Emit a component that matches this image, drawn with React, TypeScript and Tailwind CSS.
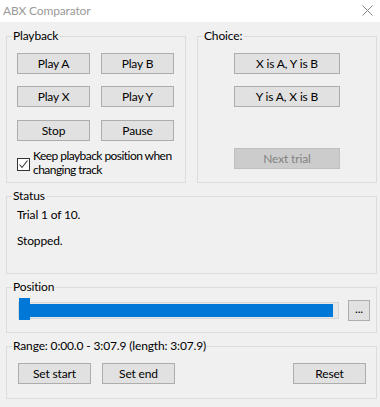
import type { ReactNode } from "react";

function Btn({
  children,
  className = "",
  disabled = false,
}: {
  children: ReactNode;
  className?: string;
  disabled?: boolean;
}) {
  return (
    <button
      type="button"
      className={`flex h-[21px] items-center justify-center border leading-none ${
        disabled
          ? "border-[#bfbfbf] bg-[#cccccc] text-[#838383]"
          : "border-[#adadad] bg-[#e1e1e1] text-black"
      } ${className}`}
    >
      {children}
    </button>
  );
}

function Group({
  label,
  className = "",
  children,
}: {
  label: string;
  className?: string;
  children: ReactNode;
}) {
  return (
    <div className={`relative border border-[#dcdcdc] ${className}`}>
      <span className="absolute left-[5px] top-[-9px] whitespace-nowrap bg-[#f0f0f0] px-[1px] leading-[16px]">
        {label}
      </span>
      {children}
    </div>
  );
}

export default function App() {
  return (
    <div
      className="h-[407px] w-[380px] overflow-hidden bg-[#f0f0f0] text-[12px] tracking-[-0.15px] text-black"
      style={{ fontFamily: 'Lato, "Noto Sans", sans-serif' }}
    >
      <div className="flex h-[22px] items-center justify-between bg-white pl-[3px] pr-[7px]">
        <span className="text-[#9a9a9a]">ABX Comparator</span>
        <svg width="11" height="11" viewBox="0 0 11 11" className="mb-[2px]">
          <path d="M0.5 0.5 L10.5 10.5 M10.5 0.5 L0.5 10.5" stroke="#8a8a8a" strokeWidth="1" fill="none" />
        </svg>
      </div>

      <div className="flex flex-col gap-[13px] pl-[6px] pr-[3px] pt-[14px]">
        <div className="flex gap-[11px]">
          <Group label="Playback" className="h-[147px] w-[180px]">
            <div className="pl-[10px] pt-[16px]">
              <div className="grid w-[157px] grid-cols-[73px_73px] gap-x-[11px]">
                <Btn>Play A</Btn>
                <Btn>Play B</Btn>
                <Btn className="mt-[12px]">Play X</Btn>
                <Btn className="mt-[12px]">Play Y</Btn>
                <Btn className="mt-[13px]">Stop</Btn>
                <Btn className="mt-[13px]">Pause</Btn>
              </div>
              <div className="mt-[8px] flex items-start gap-[3px]">
                <div className="mt-[9px] flex h-[13px] w-[13px] shrink-0 items-center justify-center border border-[#333333] bg-white">
                  <svg width="11" height="11" viewBox="0 0 11 11">
                    <path d="M1.5 5.5 L4 8.5 L9.5 1.5" stroke="#333333" strokeWidth="1.1" fill="none" />
                  </svg>
                </div>
                <div className="flex flex-col whitespace-nowrap leading-[14px] tracking-[-0.55px]">
                  <span>Keep playback position when</span>
                  <span>changing track</span>
                </div>
              </div>
            </div>
          </Group>

          <Group label="Choice:" className="h-[147px] w-[180px]">
            <div className="flex flex-col items-center pt-[16px]">
              <Btn className="w-[106px]">X is A, Y is B</Btn>
              <Btn className="mt-[12px] w-[106px]">Y is A, X is B</Btn>
              <Btn disabled className="mt-[41px] w-[106px]">
                Next trial
              </Btn>
            </div>
          </Group>
        </div>

        <Group label="Status" className="h-[78px] w-[371px]">
          <div className="flex flex-col gap-[10px] pl-[10px] pt-[10px] leading-[16px]">
            <span>Trial 1 of 10.</span>
            <span>Stopped.</span>
          </div>
        </Group>

        <Group label="Position" className="h-[46px] w-[371px]">
          <div className="flex items-center pl-[11px] pt-[12px]">
            <div className="relative flex h-[17px] w-[321px] items-center border border-[#d6d6d6] bg-[#e7e7e7]">
              <div className="h-[13px] w-[314px] bg-[#0078d7]" />
              <div className="absolute left-0 top-[-5px] h-[22px] w-[11px] bg-[#0078d7]" />
            </div>
            <Btn className="ml-[9px] w-[22px] pb-[4px]">...</Btn>
          </div>
        </Group>

        <Group label="Range: 0:00.0 - 3:07.9 (length: 3:07.9)" className="h-[53px] w-[371px]">
          <div className="flex pl-[11px] pr-[10px] pt-[16px]">
            <Btn className="w-[73px]">Set start</Btn>
            <Btn className="ml-[11px] w-[73px]">Set end</Btn>
            <Btn className="ml-auto w-[73px]">Reset</Btn>
          </div>
        </Group>
      </div>
    </div>
  );
}
